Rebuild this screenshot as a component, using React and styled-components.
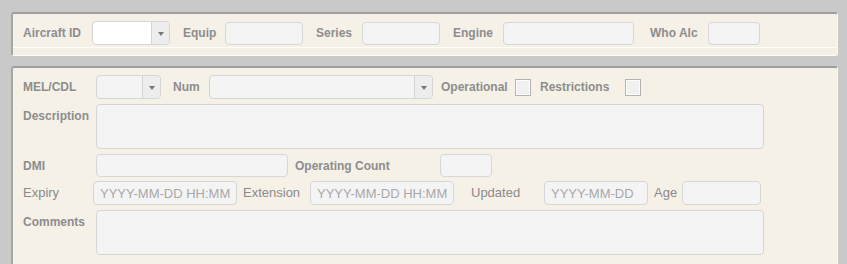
import styled, { createGlobalStyle } from 'styled-components';

const GlobalStyle = createGlobalStyle`
  body {
    margin: 0;
    background: #c9c9c9;
    font-family: "Liberation Sans", Arial, sans-serif;
  }
`;

const Page = styled.div`
  padding: 12px 9px 0 11px;
  display: flex;
  flex-direction: column;
  gap: 10px;
  height: 264px;
  box-sizing: border-box;
  overflow: hidden;
`;

const Panel = styled.section`
  background: #f5f1e7;
  border: 1px solid #fbfaf6;
  border-top: 2px solid #9e9e9e;
  border-left: 2px solid #a6a6a6;
  border-radius: 3px;
  padding: ${(p) => p.$pad};
  display: flex;
  flex-direction: column;
  gap: 5px;
`;

const Strip = styled.div`
  height: 7px;
  margin: -3px 0 0 -10px;
  border-top: 1px solid #fffdf8;
  background: #f3efe4;
`;

const Row = styled.div`
  display: flex;
  align-items: ${(p) => (p.$top ? 'flex-start' : 'center')};
  margin-top: ${(p) => p.$mt || 0}px;
`;

const Label = styled.label`
  flex: none;
  width: ${(p) => p.$w}px;
  margin-left: ${(p) => p.$ml || 0}px;
  padding-top: ${(p) => (p.$top ? 5 : 0)}px;
  font-size: ${(p) => (p.$plain ? 13 : 12)}px;
  font-weight: ${(p) => (p.$plain ? 400 : 700)};
  color: ${(p) => (p.$plain ? '#8a8a8a' : '#8d8d8d')};
  line-height: 14px;
  white-space: nowrap;
`;

const Input = styled.input`
  flex: none;
  box-sizing: border-box;
  width: ${(p) => p.$w}px;
  height: ${(p) => p.$h || 23}px;
  background: #f4f4f4;
  border: 1px solid #d7d7d7;
  border-radius: 4px;
  padding: 0 6px;
  font-family: inherit;
  font-size: 13px;
  color: #666;
  outline: none;
  &::placeholder {
    color: #a9a9a9;
  }
`;

const Area = styled.textarea`
  flex: none;
  box-sizing: border-box;
  width: ${(p) => p.$w}px;
  height: 45px;
  background: #f4f4f4;
  border: 1px solid #d5d5d5;
  border-radius: 4px;
  resize: none;
  outline: none;
`;

const Select = styled.div`
  flex: none;
  box-sizing: border-box;
  width: ${(p) => p.$w}px;
  height: ${(p) => p.$h || 24}px;
  display: flex;
  background: ${(p) => (p.$white ? '#ffffff' : '#f4f4f4')};
  border: 1px solid #d5d5d5;
  border-radius: 4px;
  overflow: hidden;
`;

const SelectValue = styled.div`
  flex: 1;
`;

const Caret = styled.div`
  flex: none;
  width: 17px;
  border-left: 1px solid #d5d5d5;
  background: #ededed;
  display: flex;
  align-items: center;
  justify-content: center;
  &::after {
    content: '';
    margin-top: 2px;
    border-left: 3px solid transparent;
    border-right: 3px solid transparent;
    border-top: 4px solid #777;
  }
`;

const Check = styled.span`
  flex: none;
  box-sizing: border-box;
  width: 16px;
  height: 17px;
  background: #f0f0f0;
  border: 1px solid #b3b3b3;
  box-shadow: inset 0 0 0 1px #fdfdfd;
`;

const Dropdown = ({ w, white }) => (
  <Select $w={w} $white={white}>
    <SelectValue />
    <Caret />
  </Select>
);

const App = () => (
  <>
    <GlobalStyle />
    <Page>
      <Panel $pad="7px 0 0 10px">
        <Row>
          <Label $w={69}>Aircraft ID</Label>
          <Dropdown w={78} white />
          <Label $ml={13} $w={42}>Equip</Label>
          <Input $w={78} />
          <Label $ml={13} $w={46}>Series</Label>
          <Input $w={78} />
          <Label $ml={13} $w={50}>Engine</Label>
          <Input $w={131} />
          <Label $ml={16} $w={58}>Who Alc</Label>
          <Input $w={52} />
        </Row>
        <Strip />
      </Panel>

      <Panel $pad="7px 0 10px 10px">
        <Row>
          <Label $w={73}>MEL/CDL</Label>
          <Dropdown w={65} />
          <Label $ml={12} $w={36}>Num</Label>
          <Dropdown w={224} />
          <Label $ml={8} $w={74}>Operational</Label>
          <Check />
          <Label $ml={9} $w={85}>Restrictions</Label>
          <Check />
        </Row>
        <Row $top>
          <Label $w={73} $top>Description</Label>
          <Area $w={668} />
        </Row>
        <Row>
          <Label $w={73}>DMI</Label>
          <Input $w={192} />
          <Label $ml={7} $w={145}>Operating Count</Label>
          <Input $w={52} />
        </Row>
        <Row $mt={-1}>
          <Label $plain $w={70}>Expiry</Label>
          <Input $w={144} $h={24} placeholder="YYYY-MM-DD HH:MM" />
          <Label $plain $ml={6} $w={67}>Extension</Label>
          <Input $w={144} $h={24} placeholder="YYYY-MM-DD HH:MM" />
          <Label $plain $ml={17} $w={73}>Updated</Label>
          <Input $w={104} $h={24} placeholder="YYYY-MM-DD" />
          <Label $plain $ml={6} $w={28}>Age</Label>
          <Input $w={79} $h={24} />
        </Row>
        <Row $top>
          <Label $w={73} $top>Comments</Label>
          <Area $w={668} />
        </Row>
      </Panel>
    </Page>
  </>
);

export default App;
